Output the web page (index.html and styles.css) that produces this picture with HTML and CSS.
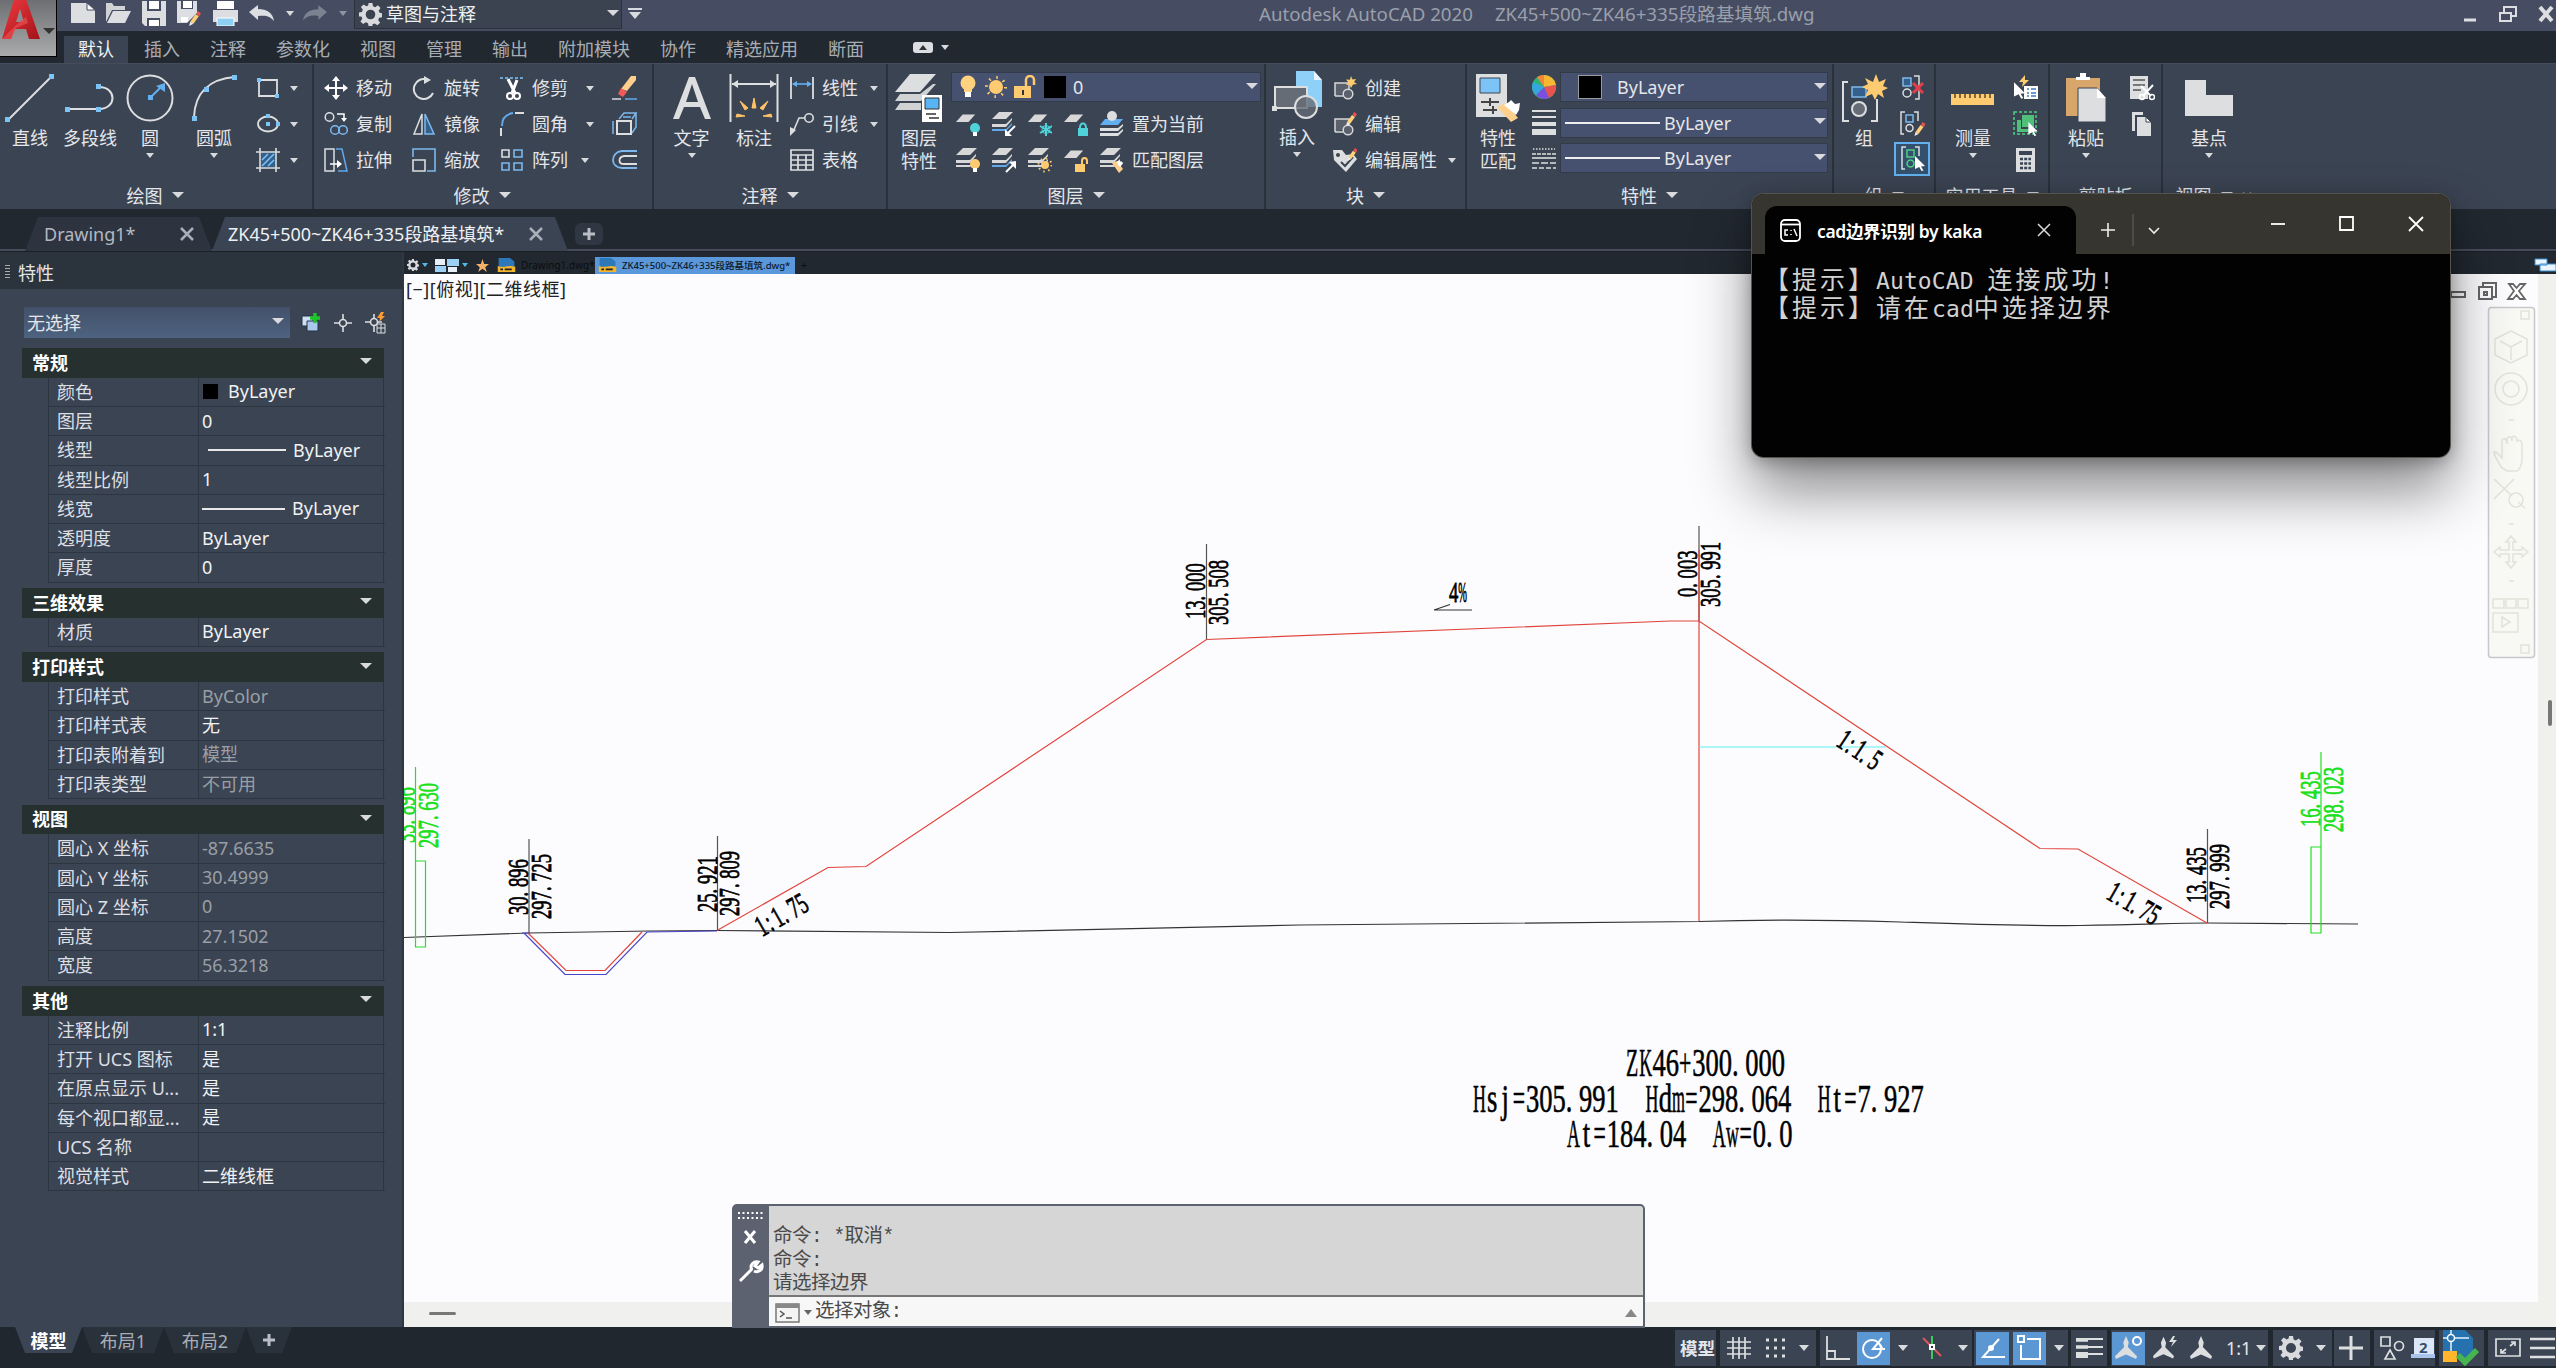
FILE: index.html
```html
<!DOCTYPE html>
<html lang="zh-CN">
<head>
<meta charset="utf-8">
<title>Autodesk AutoCAD 2020</title>
<link rel="stylesheet" href="styles.css">
</head>
<body>
<svg class="defs" width="0" height="0">
  <defs>
    <linearGradient id="redA" x1="0" y1="0" x2="1" y2="1"><stop offset="0" stop-color="#ef3b3f"/><stop offset="1" stop-color="#a3121a"/></linearGradient>
    <symbol id="sheet" viewBox="0 0 24 24"><path d="M8 3h15l-8 9H0z" fill="#d8d8d8"/></symbol>
    <symbol id="stack" viewBox="0 0 24 24"><path d="M7 1h14l-7 7H0z" fill="#d8d8d8"/><path d="M0 13h14l6-6v2l-6 7H0z" fill="#d8d8d8"/><path d="M0 18h14l6-6v2l-6 6H0z" fill="#d8d8d8"/></symbol>
    <symbol id="stackblue" viewBox="0 0 24 24"><path d="M7 1h14l-7 7H0z" fill="#d8d8d8"/><path d="M0 13h14l6-6v2l-6 7H0z" fill="#d8d8d8"/><path d="M0 18h14l6-6v2l-6 6H0z" fill="#62a8ea"/></symbol>
    <symbol id="pencil" viewBox="0 0 12 14"><path d="M9 0l3 2-1.500 3-3-2z" fill="#e8534f"/><path d="M7 3l3 2-5 7-3-2z" fill="#ffcf7a"/><path d="M2 10l3 2-4 2z" fill="#eee"/></symbol>
    <symbol id="gear" viewBox="0 0 24 24"><path fill-rule="evenodd" fill="#d8dade" d="M10 0h4l.6 3.400 2.300 1 2.800-2 2.800 2.800-2 2.800 1 2.300 2.500.5v4l-3 .6-1 2.300 2 2.800-2.800 2.800-2.800-2-2.300 1L14 24h-4l-.6-3-2.300-1-2.800 2-2.800-2.800 2-2.800-1-2.300L0 14v-4l3-.6 1-2.300-2-2.800L4.800 1.500l2.800 2 2-.9zM12 7a5 5 0 100 10 5 5 0 000-10z"/></symbol>
    <symbol id="cursor" viewBox="0 0 10 15"><path d="M0 0l10 10-4 .4 2.500 4-2 .6-2.200-4L0 13z" fill="#fff"/></symbol>
    <symbol id="dwg" viewBox="0 0 20 16"><path d="M1 0h13l5 4v12H1z" fill="#2c78b8"/><path d="M0 9c8 3 12-2 20 1v6H0z" fill="#f4b52c"/><path d="M3 12h3v2H3zM8 12h8v2H8z" fill="#222"/></symbol>
    <symbol id="comp" viewBox="0 0 24 24"><path d="M2 20v-13h14v9" fill="#5a616d" stroke="#d8d8d8" stroke-width="1.500"/><path d="M2 20h8" stroke="#d8d8d8" stroke-width="1.500"/><circle cx="15" cy="18" r="4.800" fill="#5a616d" stroke="#d8d8d8" stroke-width="1.500"/></symbol>
    <symbol id="person" viewBox="0 0 24 26"><path d="M12 0l3 7-1 5 10 10-1 3-11-5-11 5-1-3 10-10-1-5z" fill="#dcdee0"/></symbol>
  </defs>
</svg>

<div class="app">
  <div class="top">
    <div class="appbtn">
      <svg width="40" height="42" viewBox="0 0 40 42"><path d="M0 40L12 0h12l14 40H27l-3-10H12L9 40z" fill="url(#redA)"/><path d="M18 10l-4 13h8z" fill="#8a8f94"/><path d="M0 40L14 26l10-8 2 6-12 5-5 11z" fill="#e5494c" opacity=".8"/></svg>
      <i class="caret dark"></i>
    </div>
    <div class="toprows">
      <header class="titlebar">
        <div class="qat">
          <svg width="24" height="20" viewBox="0 0 24 20"><path d="M0 0h16l8 7v13H0z" fill="#dcdee2"/><path d="M16 0v7h8z" fill="#fff" stroke="#464e63"/></svg>
          <svg width="25" height="20" viewBox="0 0 25 20"><path d="M0 19V0h6l2 3h11v4H6z" fill="#d0d2d6"/><path d="M7 8h18l-6 12H1z" fill="#dcdee2"/></svg>
          <svg width="24" height="25" viewBox="0 0 24 25"><path d="M0 0h24v25H3l-3-3z" fill="#dcdee2"/><path d="M5 0h14v10H5zM5 17h13v8H5z" fill="#464e63"/><path d="M7 0h10v8H7zM7 19h10v6H7z" fill="#fff"/></svg>
          <svg width="25" height="25" viewBox="0 0 25 25"><path d="M0 0h20v12l-10 10H0z" fill="#dcdee2"/><path d="M4 0h12v8H4z" fill="#464e63"/><path d="M6 0h9v7H6zM4 16h7v5H4z" fill="#fff"/><svg x="10" y="10" width="15" height="15"><use href="#pencil"/></svg></svg>
          <svg width="25" height="25" viewBox="0 0 25 25"><path d="M4 0h17v8H4z" fill="#fff"/><path d="M0 9h25v12H0z" fill="#dcdee2"/><path d="M4 17h17v8H4z" fill="#8fd0f5" stroke="#fff"/></svg>
          <svg width="25" height="17" viewBox="0 0 25 17"><path d="M0 7l9-7v4c9 0 15 4 16 12-4-5-8-6-16-5v4z" fill="#dcdee2"/></svg>
          <i class="caret"></i>
          <svg width="24" height="17" viewBox="0 0 25 17"><path d="M25 7l-9-7v4C7 4 1 8 0 16c4-5 8-6 16-5v4z" fill="#7b8290"/></svg>
          <i class="caret faint"></i>
        </div>
        <div class="workspace"><svg width="23" height="23"><use href="#gear"/></svg><span>草图与注释</span><i class="caret big"></i></div>
        <svg class="custom" width="14" height="11" viewBox="0 0 14 11"><path d="M0 0h14v2H0zM1 4h12l-6 7z" fill="#d8dade"/></svg>
        <div class="caption"><span>Autodesk AutoCAD 2020</span><span>ZK45+500~ZK46+335段路基填筑.dwg</span></div>
        <div class="winbtns">
          <svg width="92" height="20" viewBox="0 0 92 20"><path d="M0 16h12" stroke="#dcdee2" stroke-width="3"/><g fill="none" stroke="#dcdee2" stroke-width="2"><path d="M40 8V3h12v9h-5"/><path d="M36 9h11v8H36z"/></g><path d="M76 3l12 14M88 3L76 17" stroke="#dcdee2" stroke-width="4"/></svg>
        </div>
      </header>
      <nav class="menu">
        <a class="on">默认</a><a>插入</a><a>注释</a><a>参数化</a><a>视图</a><a>管理</a><a>输出</a><a>附加模块</a><a>协作</a><a>精选应用</a><a>断面</a>
        <svg width="20" height="11" viewBox="0 0 20 11"><rect width="20" height="11" rx="3" fill="#dcdee2"/><path d="M6 8l4-5 4 5z" fill="#333"/></svg><i class="caret"></i>
      </nav>
    </div>
  </div>

  <div class="ribbon">
    <section class="panel p-draw">
      <div class="body">
        <div class="big w60"><svg width="50" height="50" viewBox="0 0 50 50"><path d="M4 46L46 4" stroke="#dcdee0" stroke-width="2"/><path d="M0 44h5v5H0zM44 1h5v5h-5z" fill="#7cc4f8"/></svg><b>直线</b></div>
        <div class="big w60"><svg width="50" height="50" viewBox="0 0 50 50"><path d="M3 36h32M34 14c18 0 18 22 0 22" fill="none" stroke="#dcdee0" stroke-width="2"/><path d="M0 34h5v5H0zM31 34h5v5h-5zM31 11h5v5h-5z" fill="#7cc4f8"/></svg><b>多段线</b></div>
        <div class="big w60"><svg width="50" height="50" viewBox="0 0 50 50"><circle cx="25" cy="25" r="22.500" fill="none" stroke="#dcdee0" stroke-width="2"/><path d="M26 24l11-11" stroke="#62b0f0" stroke-width="2"/><path d="M40 10v9l-9-6zM23 22h5v5h-5z" fill="#62b0f0"/></svg><b>圆</b><i class="caret"></i></div>
        <div class="big w68"><svg width="50" height="50" viewBox="0 0 50 50"><path d="M5 44C6 20 20 6 46 4" fill="none" stroke="#dcdee0" stroke-width="2"/><path d="M3 43h5v5H3zM15 14h5v5h-5zM43 2h5v5h-5z" fill="#7cc4f8"/></svg><b>圆弧</b><i class="caret"></i></div>
        <div class="tools">
          <div class="tool"><svg width="24" height="24"><path d="M3 4h18v16H3z" fill="none" stroke="#dcdee0" stroke-width="1.800"/><path d="M1 2h4v4H1zM19 18h4v4h-4z" fill="#7cc4f8"/></svg><i class="caret"></i></div>
          <div class="tool"><svg width="24" height="24"><ellipse cx="12" cy="12" rx="10" ry="7.500" fill="none" stroke="#dcdee0" stroke-width="1.800"/><path d="M10 10h4v4h-4zM10 2h4v4h-4zM20 10h4v4h-4z" fill="#7cc4f8"/></svg><i class="caret"></i></div>
          <div class="tool"><svg width="24" height="24"><path d="M5 5h14v14H5z" fill="#35608c"/><path d="M6 12l6-6M6 18L18 6M12 18l6-6" stroke="#7cc4f8" stroke-width="1.500"/><path d="M4 0v24M20 0v24M0 4h24M0 20h24" stroke="#dcdee0" stroke-width="1.600"/></svg><i class="caret"></i></div>
        </div>
      </div>
      <h4>绘图<i class="caret big"></i></h4>
    </section>

    <section class="panel p-modify">
      <div class="body grid">
        <div class="tool"><svg width="24" height="24"><path d="M12 3v18M3 12h18" stroke="#fff" stroke-width="2"/><path d="M12 0l4 5H8zM12 24l4-5H8zM0 12l5-4v8zM24 12l-5-4v8z" fill="#fff"/></svg><b>移动</b></div>
        <div class="tool"><svg width="24" height="24"><path d="M15 3.500A10 10 0 1 0 21 17" fill="none" stroke="#dcdee0" stroke-width="2"/><path d="M12 0l7 4-7 4z" fill="#dcdee0"/></svg><b>旋转</b></div>
        <div class="tool"><svg width="24" height="24"><path d="M0 2h24" stroke="#7cc4f8" stroke-width="1.500" stroke-dasharray="3 2"/><path d="M8 3l7 14M17 4l-5 13" stroke="#fff" stroke-width="3"/><circle cx="10" cy="20" r="3" fill="none" stroke="#fff" stroke-width="2"/><circle cx="17" cy="20" r="3" fill="none" stroke="#fff" stroke-width="2"/></svg><b>修剪</b><i class="caret"></i></div>
        <div class="tool"><svg width="26" height="24"><path d="M19 0h5v4l-9 11-6-2z" fill="#ffcf8c"/><path d="M9 12l6 4-4 5-5-3z" fill="#ee5b5b"/><path d="M0 23h9" stroke="#ddd" stroke-width="1.500"/><path d="M13 23h12" stroke="#62a8ea" stroke-width="1.500"/></svg></div>
        <div class="tool"><svg width="24" height="24"><circle cx="5.500" cy="5" r="4.300" fill="none" stroke="#dcdee0" stroke-width="1.500"/><path d="M13 2h7v5" fill="none" stroke="#fff" stroke-width="1.500"/><path d="M17 6h6l-3 4z" fill="#fff"/><g fill="none" stroke="#7cb8ee" stroke-width="1.500"><circle cx="11" cy="18" r="4.300"/><circle cx="19" cy="18" r="4.300"/></g></svg><b>复制</b></div>
        <div class="tool"><svg width="24" height="24"><path d="M10 2v20H2z" fill="none" stroke="#dcdee0" stroke-width="1.500"/><path d="M13 2v20h9z" fill="#35608c" stroke="#7cb8ee" stroke-width="1.500"/></svg><b>镜像</b></div>
        <div class="tool"><svg width="24" height="24"><path d="M2 14C2 5 7 2 13 1" fill="none" stroke="#62a8ea" stroke-width="2"/><path d="M15 1h9M1 16v8" stroke="#dcdee0" stroke-width="2"/></svg><b>圆角</b><i class="caret"></i></div>
        <div class="tool"><svg width="26" height="24"><path d="M5 9h14v13H5z" fill="none" stroke="#dcdee0" stroke-width="2"/><path d="M7 7l5-6h12l-4 6M24 1v14l-4 6M1 9v13M11 5h8" fill="none" stroke="#7cb8ee" stroke-width="1.500"/></svg></div>
        <div class="tool"><svg width="24" height="24"><path d="M1 1h9v22H1z" fill="none" stroke="#dcdee0" stroke-width="1.500"/><path d="M12 1h6l5 22h-9" fill="none" stroke="#62a8ea" stroke-width="1.500"/><path d="M6 16h10" stroke="#fff" stroke-width="1.500"/><path d="M13 12l5 4-5 4z" fill="#fff"/></svg><b>拉伸</b></div>
        <div class="tool"><svg width="24" height="24"><path d="M1 9V1h22v22h-8" fill="none" stroke="#7cb8ee" stroke-width="1.600"/><path d="M1 12h12v11H1z" fill="none" stroke="#dcdee0" stroke-width="1.600"/></svg><b>缩放</b></div>
        <div class="tool"><svg width="24" height="24" fill="none" stroke="#7cb8ee" stroke-width="1.600"><path d="M2 2h7v7H2z" stroke="#dcdee0"/><path d="M14 2h8v7h-8zM2 15h7v7H2zM14 15h8v7h-8z"/></svg><b>阵列</b><i class="caret near"></i></div>
        <div class="tool"><svg width="26" height="24" fill="none"><path d="M25 3H10C-2 4-2 20 10 20h15" stroke="#7cb8ee" stroke-width="1.800"/><path d="M25 8H12c-6 1-6 8 0 8h13" stroke="#dcdee0" stroke-width="1.800"/></svg></div>
      </div>
      <h4>修改<i class="caret big"></i></h4>
    </section>

    <section class="panel p-annot">
      <div class="body">
        <div class="big w75"><svg width="50" height="50" viewBox="0 0 50 50"><path d="M6 46L22 4h6l16 42h-6l-5-12H17l-5 12zM19 29h12L25 11z" fill="#dcdee0" fill-rule="evenodd"/></svg><b>文字</b><i class="caret"></i></div>
        <div class="big w50"><svg width="50" height="50" viewBox="0 0 50 50"><path d="M1.500 1v48M48.500 1v48M3 11h44" stroke="#dcdee0" stroke-width="2"/><path d="M3 11l6-4v8zM47 11l-6-4v8z" fill="#dcdee0"/><path d="M23 35l2-10 2 10zM16 37l-5-9 8 7zM34 37l5-9-8 7zM7 44l9-1-8-2zM43 44l-9-1 8-2z" fill="#ffc266" stroke="#ffc266"/></svg><b>标注</b></div>
        <div class="tools">
          <div class="tool"><svg width="24" height="24"><path d="M1 1v22M23 1v22" stroke="#dcdee0" stroke-width="1.800"/><path d="M3 8h18" stroke="#62b0f0" stroke-width="1.600"/><path d="M2 8l5-3v6zM22 8l-5-3v6z" fill="#62b0f0"/></svg><b>线性</b><i class="caret"></i></div>
          <div class="tool"><svg width="24" height="24"><circle cx="19" cy="6" r="4.200" fill="none" stroke="#dcdee0" stroke-width="1.600"/><path d="M15 6H9L3 20" fill="none" stroke="#dcdee0" stroke-width="1.600"/><path d="M0 24V15l6 3z" fill="#dcdee0"/></svg><b>引线</b><i class="caret"></i></div>
          <div class="tool"><svg width="24" height="24"><path d="M1 2h22v20H1zM1 7h22M1 12h22M1 17h22M8 7v15M16 7v15" fill="none" stroke="#dcdee0" stroke-width="1.700"/></svg><b>表格</b></div>
        </div>
      </div>
      <h4>注释<i class="caret big"></i></h4>
    </section>

    <section class="panel p-layer">
      <div class="body">
        <div class="big w62"><svg width="50" height="50" viewBox="0 0 50 50"><path d="M16 1h26L26 19H1z" fill="#dcdee0"/><path d="M6 21h20l13-10h3L27 28H1zM6 30h21v7H1z" fill="#d0d2d4"/><path d="M28 22h20v27H28z" fill="#fff"/><path d="M31 25h14v11H31z" fill="#58b4f2" stroke="#333"/><path d="M32 41h10M35 45h10" stroke="#333" stroke-width="1.500"/></svg><b>图层<br>特性</b></div>
        <div class="layercol">
          <div class="combo">
            <svg width="76" height="24" viewBox="0 0 76 24"><circle cx="8" cy="8" r="7.500" fill="#ffd27f"/><path d="M4 12h8v5H4z" fill="#ffd27f"/><path d="M5 17h6v5H5z" fill="#fff"/><circle cx="36" cy="12" r="7" fill="#ffcb70"/><circle cx="36" cy="12" r="9.500" fill="none" stroke="#ffcb70" stroke-width="3" stroke-dasharray="1.500 5.960"/><path d="M54 11h17v12H54z" fill="#ffcb70"/><path d="M66 11V5a4 4 0 0 1 8 0v5" fill="none" stroke="#ffcb70" stroke-width="2.500"/><path d="M62 15h2v5h-2z" fill="#333"/></svg>
            <i class="swatch"></i><span>0</span><i class="caret big"></i>
          </div>
          <div class="icons">
            <svg width="24" height="26" viewBox="0 0 24 26"><use href="#sheet" width="20" height="22"/><circle cx="19" cy="17" r="5" fill="#4fd3d8"/><path d="M17 21h4v4h-4z" fill="#fff"/></svg>
            <svg width="24" height="26" viewBox="0 0 24 26"><use href="#stackblue" width="24" height="24"/><path d="M23 15l-8 8" stroke="#fff" stroke-width="2"/><path d="M13 25v-7l7 7z" fill="#fff"/></svg>
            <svg width="24" height="26" viewBox="0 0 24 26"><use href="#sheet" width="20" height="22"/><path d="M18 12v13M12 15l12 7M24 15l-12 7" stroke="#4fd3d8" stroke-width="2"/><circle cx="18" cy="18.500" r="4" fill="none" stroke="#4fd3d8"/></svg>
            <svg width="24" height="26" viewBox="0 0 24 26"><use href="#sheet" width="20" height="22"/><path d="M14 17h10v8H14z" fill="#4fd3d8"/><path d="M16 17c0-6 6-6 6 0" fill="none" stroke="#4fd3d8" stroke-width="2"/></svg>
            <svg width="24" height="26" viewBox="0 0 24 26"><path d="M5 8h18l-5 6H0z" fill="#62b0f0"/><circle cx="12" cy="5" r="5" fill="#dcdee0"/><path d="M0 17h18l5-4v2l-5 5H0zM0 22h18l5-4v2l-5 5H0z" fill="#dcdee0"/></svg>
            <b>置为当前</b>
          </div>
          <div class="icons">
            <svg width="24" height="26" viewBox="0 0 24 26"><use href="#stack" width="24" height="24"/><circle cx="19" cy="17" r="5" fill="#ffcb70"/><path d="M17 21h4v4h-4z" fill="#fff"/></svg>
            <svg width="24" height="26" viewBox="0 0 24 26"><use href="#stackblue" width="24" height="24"/><path d="M14 25l8-8" stroke="#fff" stroke-width="2"/><path d="M24 14v8l-7-7z" fill="#fff"/></svg>
            <svg width="24" height="26" viewBox="0 0 24 26"><use href="#stack" width="24" height="24"/><circle cx="17" cy="18" r="4" fill="#ffcb70"/><circle cx="17" cy="18" r="6.500" fill="none" stroke="#ffcb70" stroke-width="2" stroke-dasharray="1.500 3.600"/></svg>
            <svg width="24" height="26" viewBox="0 0 24 26"><use href="#sheet" width="20" height="22"/><path d="M11 17h10v8H11z" fill="#ffcb70"/><path d="M18 17v-3c0-4 5-4 5 0v3" fill="none" stroke="#ffcb70" stroke-width="2"/></svg>
            <svg width="24" height="26" viewBox="0 0 24 26"><use href="#stack" width="24" height="24"/><path d="M12 16l5-2 6 8-4 4z" fill="#ffcf8c"/><path d="M18 14l2 3M22 15l-3 4" stroke="#fff" stroke-width="3"/></svg>
            <b>匹配图层</b>
          </div>
        </div>
      </div>
      <h4>图层<i class="caret big"></i></h4>
    </section>

    <section class="panel p-block">
      <div class="body">
        <div class="big w62"><svg class="up2" width="50" height="50" viewBox="0 0 50 50"><path d="M24 0h18l8 9v27H24z" fill="#8fd0f8"/><path d="M42 0v9h8z" fill="#e8f4ff"/><path d="M3 16h32v21H3z" fill="#666c76" stroke="#dcdee0" stroke-width="2"/><circle cx="34" cy="36" r="11" fill="#666c76" fill-opacity=".8" stroke="#dcdee0" stroke-width="2"/><path d="M0 35h5v5H0z" fill="#dcdee0"/></svg><b>插入</b><i class="caret"></i></div>
        <div class="tools">
          <div class="tool"><svg width="24" height="24"><use href="#comp"/><path d="M18 0l1.500 3.500L23 3l-2 3 3 2-4 .6L18 12l-1.500-3.500L13 9l2-3-2-2.500 4 .2z" fill="#ffcb70"/></svg><b>创建</b></div>
          <div class="tool"><svg width="24" height="24"><use href="#comp"/><svg x="12" y="0" width="12" height="14"><use href="#pencil"/></svg></svg><b>编辑</b></div>
          <div class="tool"><svg width="24" height="24"><path d="M0 2h9l4 5 7-1 4 5-11 13L1 12z" fill="#dcdee0"/><circle cx="5" cy="7" r="2" fill="#3b4453"/><path d="M8 14l4 4 8-9" fill="none" stroke="#3b4453" stroke-width="2"/><svg x="13" y="0" width="12" height="13"><use href="#pencil"/></svg></svg><b>编辑属性</b><i class="caret"></i></div>
        </div>
      </div>
      <h4>块<i class="caret big"></i></h4>
    </section>

    <section class="panel p-props">
      <div class="body">
        <div class="big w62"><svg width="50" height="50" viewBox="0 0 50 50"><path d="M3 1h31v43H3z" fill="#dcdee0"/><path d="M7 5h20v15H7z" fill="#7cc4f8" stroke="#3b4453"/><path d="M8 29h18M10 37h14M17 25v8M20 33v8" stroke="#444" stroke-width="2"/><path d="M24 34l9-4 12 15-7 4z" fill="#ffcf8c"/><path d="M31 32l5-3 2-2 4 4 5-1-1 7-3 5z" fill="#fff"/></svg><b>特性<br>匹配</b></div>
        <div class="propicons">
          <svg width="26" height="26"><circle cx="13" cy="13" r="12" fill="#2bb673"/><path d="M13 13V1a12 12 0 0 1 12 10z" fill="#f7b733"/><path d="M13 13l12-2a12 12 0 0 1-7 13z" fill="#e8534f"/><path d="M13 13l5 11a12 12 0 0 1-13-3z" fill="#7b4fe0"/><path d="M13 13l-8 8a12 12 0 0 1-3-13z" fill="#35a7e0"/><path d="M13 13L6 3a12 12 0 0 1 7-2z" fill="#f5853a"/></svg>
          <svg width="26" height="26"><path d="M1 1h24M1 7h24" stroke="#dcdee0" stroke-width="2"/><path d="M1 14h24" stroke="#dcdee0" stroke-width="4"/><path d="M1 22h24" stroke="#dcdee0" stroke-width="6"/></svg>
          <svg width="26" height="26" stroke="#dcdee0" stroke-width="1.600"><path d="M2 3h22" stroke-dasharray="1.500 1.500"/><path d="M1 8h24" stroke-dasharray="4 1"/><path d="M1 12h24"/><path d="M1 17h24" stroke-dasharray="7 2"/><path d="M1 22h24" stroke-dasharray="5 2"/></svg>
        </div>
        <div class="combos">
          <div class="combo c1"><i class="swatch"></i><span>ByLayer</span><i class="caret big"></i></div>
          <div class="combo"><i class="rule"></i><span>ByLayer</span><i class="caret big"></i></div>
          <div class="combo"><i class="rule"></i><span>ByLayer</span><i class="caret big"></i></div>
        </div>
      </div>
      <h4>特性<i class="caret big"></i></h4>
    </section>

    <section class="panel p-group">
      <div class="body">
        <div class="big w60"><svg width="50" height="50" viewBox="0 0 50 50"><path d="M9 9H4v39h6M32 48h6V26" fill="none" stroke="#dcdee0" stroke-width="2"/><path d="M13 14h14v10H13z" fill="#35608c" stroke="#7cb8ee" stroke-width="1.500"/><circle cx="20" cy="36" r="7" fill="#666c76" stroke="#dcdee0" stroke-width="2"/><path d="M37 1l3 8 7-3-3 7 5 2-6 3 2 7-6-4-3 6-3-6-7 3 3-7-6-3 6-3-3-6 8 4z" fill="#ffcb70"/></svg><b>组</b></div>
        <div class="tools flush">
          <div class="tool"><svg width="26" height="26" fill="none"><path d="M3 3h8v8H3z" fill="#35608c" stroke="#7cb8ee" stroke-width="1.500"/><circle cx="7" cy="18" r="4" stroke="#dcdee0" stroke-width="1.500"/><path d="M14 1h5v23h-4" stroke="#dcdee0" stroke-width="1.500"/><path d="M13 8l10 10M23 8L13 18" stroke="#e33f4a" stroke-width="3"/></svg></div>
          <div class="tool"><svg width="26" height="26" fill="none"><path d="M6 4h7v7H6z" stroke="#7cb8ee" stroke-width="1.500"/><circle cx="9.500" cy="17" r="3.500" stroke="#dcdee0" stroke-width="1.500"/><path d="M5 1H1v22h3M14 1h4v9" stroke="#dcdee0" stroke-width="1.500"/><svg x="13" y="11" width="13" height="14"><use href="#pencil"/></svg></svg></div>
          <div class="tool active"><svg width="26" height="26" fill="none"><path d="M6 4h7v7H6zM9.500 14a3.500 3.500 0 1 0 .1 0" stroke="#4bd080" stroke-width="1.500"/><path d="M5 1H1v22h3M14 1h4v9" stroke="#dcdee0" stroke-width="1.500"/><svg x="14" y="10" width="10" height="15"><use href="#cursor"/></svg></svg></div>
        </div>
      </div>
      <h4>组<i class="caret big"></i></h4>
    </section>

    <section class="panel p-util">
      <div class="body">
        <div class="big w74"><svg width="50" height="50" viewBox="0 0 50 50"><path d="M3 21h43v11H3z" fill="#ffcb70"/><path d="M7 21v4M12 21v4M17 21v4M22 21v4M27 21v4M32 21v4M37 21v4M42 21v4" stroke="#5c4a20" stroke-width="1.500"/></svg><b>测量</b><i class="caret"></i></div>
        <div class="tools">
          <div class="tool"><svg width="26" height="26"><path d="M12 0l-6 7h4l-1 5 7-7h-4z" fill="#ffcb70"/><path d="M11 11h14v13H11z" fill="#fff"/><path d="M14 14h2M18 14h5M14 18h2M18 18h5M14 21h2M18 21h5" stroke="#3b7ac0" stroke-width="1.500"/><svg x="1" y="7" width="11" height="17"><use href="#cursor"/></svg></svg></div>
          <div class="tool"><svg width="26" height="26"><path d="M1 1h22v22H1z" fill="none" stroke="#4bd080" stroke-width="1.500" stroke-dasharray="3 2"/><path d="M9 4h12v12H9z" fill="#4fbf7a"/><path d="M4 9h4v9h9v3H4z" fill="#4fbf7a"/><svg x="15" y="11" width="10" height="14"><use href="#cursor"/></svg></svg></div>
          <div class="tool"><svg width="26" height="26"><path d="M3 1h19v24H3z" fill="#dcdee0"/><path d="M6 4h13v4H6z" fill="#3b4453"/><path d="M7 12h11M7 16.500h11M7 21h11" stroke="#3b4453" stroke-width="2.500" stroke-dasharray="3 1.200"/></svg></div>
        </div>
      </div>
      <h4>实用工具<i class="caret big"></i></h4>
    </section>

    <section class="panel p-clip">
      <div class="body">
        <div class="big w72"><svg width="50" height="50" viewBox="0 0 50 50"><path d="M5 5h34v38H5z" fill="#d8a66a"/><path d="M15 7V4h4V0h6v4h4v3z" fill="#fff"/><path d="M17 15h19l9 10v24H17z" fill="#dcdee0" stroke="#3b4453"/><path d="M36 15v10h9z" fill="#fff"/></svg><b>粘贴</b><i class="caret"></i></div>
        <div class="tools">
          <div class="tool"><svg width="26" height="26"><path d="M1 1h18v23H1z" fill="#dcdee0"/><path d="M4 5h12M4 10h12M4 15h8" stroke="#555" stroke-width="1.500"/><path d="M12 11l10 10M24 10L14 21" stroke="#fff" stroke-width="2"/><circle cx="13" cy="22" r="2.500" fill="none" stroke="#fff" stroke-width="1.500"/><circle cx="23" cy="22" r="2.500" fill="none" stroke="#fff" stroke-width="1.500"/></svg></div>
          <div class="tool"><svg width="26" height="26"><path d="M3 20V1h11v3H6v16z" fill="#dcdee0"/><path d="M8 6h9l5 5v14H8z" fill="#dcdee0"/><path d="M17 6v5h5z" fill="#fff" stroke="#3b4453"/></svg></div>
        </div>
      </div>
      <h4>剪贴板</h4>
    </section>

    <section class="panel p-view">
      <div class="body">
        <div class="big w92"><svg width="50" height="50" viewBox="0 0 50 50"><path d="M1 7h21v15h27v21H1z" fill="#dcdee0"/></svg><b>基点</b><i class="caret"></i></div>
      </div>
      <h4>视图<i class="caret big"></i><em>⇲</em></h4>
    </section>
  </div>

  <div class="files">
    <div class="ftab t1"><span>Drawing1*</span><svg width="14" height="14"><path d="M1 1l12 12M13 1L1 13" stroke="#a9afb8" stroke-width="2.500"/></svg></div>
    <div class="ftab t2"><span>ZK45+500~ZK46+335段路基填筑*</span><svg width="14" height="14"><path d="M1 1l12 12M13 1L1 13" stroke="#a9afb8" stroke-width="2.500"/></svg></div>
    <div class="fadd"><svg width="12" height="12"><path d="M6 0v12M0 6h12" stroke="#b9bec6" stroke-width="3"/></svg></div>
  </div>

  <div class="main">
    <aside class="side">
      <div class="sidehead"><i class="grip"></i>特性</div>
      <div class="selrow">
        <div class="sel">无选择<i class="caret big"></i></div>
        <svg width="20" height="20"><path d="M1 3h11v10H1z" fill="#cfe0f5" stroke="#234"/><path d="M6 8h11v10H6z" fill="#a9c8ec" stroke="#234"/><path d="M14 0v10M9 5h10" stroke="#1fc42b" stroke-width="3.500"/></svg>
        <svg width="18" height="18"><path d="M9 0v18M0 9h18" stroke="#dcdee0" stroke-width="1.600"/><circle cx="9" cy="9" r="3.500" fill="#3b4453" stroke="#dcdee0" stroke-width="1.600"/></svg>
        <svg width="22" height="22"><path d="M9 2v18M0 10h17" stroke="#dcdee0" stroke-width="1.600"/><circle cx="9" cy="10" r="3.500" fill="#3b4453" stroke="#dcdee0" stroke-width="1.600"/><path d="M16 0l-4 6h3l-1 4 6-6h-3l2-4z" fill="#ff9d2e"/><path d="M12 12h8v9h-8zM12 16h8M16 12v9" fill="#3b4453" stroke="#dcdee0"/></svg>
      </div>
      <div class="sec"><h5>常规<i class="caret big"></i></h5>
        <dl><dt>颜色</dt><dd><i class="sw"></i>ByLayer</dd><dt>图层</dt><dd>0</dd><dt>线型</dt><dd><i class="ln a"></i>ByLayer</dd><dt>线型比例</dt><dd>1</dd><dt>线宽</dt><dd><i class="ln"></i>ByLayer</dd><dt>透明度</dt><dd>ByLayer</dd><dt>厚度</dt><dd>0</dd></dl></div>
      <div class="sec"><h5>三维效果<i class="caret big"></i></h5>
        <dl><dt>材质</dt><dd>ByLayer</dd></dl></div>
      <div class="sec"><h5>打印样式<i class="caret big"></i></h5>
        <dl><dt>打印样式</dt><dd class="dim">ByColor</dd><dt>打印样式表</dt><dd>无</dd><dt>打印表附着到</dt><dd class="dim">模型</dd><dt>打印表类型</dt><dd class="dim">不可用</dd></dl></div>
      <div class="sec"><h5>视图<i class="caret big"></i></h5>
        <dl><dt>圆心 X 坐标</dt><dd class="dim">-87.6635</dd><dt>圆心 Y 坐标</dt><dd class="dim">30.4999</dd><dt>圆心 Z 坐标</dt><dd class="dim">0</dd><dt>高度</dt><dd class="dim">27.1502</dd><dt>宽度</dt><dd class="dim">56.3218</dd></dl></div>
      <div class="sec"><h5>其他<i class="caret big"></i></h5>
        <dl><dt>注释比例</dt><dd>1:1</dd><dt>打开 UCS 图标</dt><dd>是</dd><dt>在原点显示 U...</dt><dd>是</dd><dt>每个视口都显...</dt><dd>是</dd><dt>UCS 名称</dt><dd></dd><dt>视觉样式</dt><dd>二维线框</dd></dl></div>
    </aside>

    <div class="work">
      <div class="strip">
        <svg width="12" height="12"><use href="#gear"/></svg><i class="caret cy"></i>
        <svg class="m1" width="24" height="13"><path d="M0 0h10v6H0zM13 8h9v5h-9z" fill="#e8eef6"/><path d="M12 0h12v7H12zM0 7h11v6H0z" fill="#9cd0f5"/></svg><i class="caret cy"></i>
        <svg class="m2" width="13" height="13" viewBox="0 0 24 24"><path d="M12 0l3 9h9l-7 6 3 9-8-6-8 6 3-9-7-6h9z" fill="#f7b26a"/></svg>
        <svg class="m3" width="19" height="14"><use href="#dwg"/></svg><span class="d1">Drawing1.dwg*</span>
        <div class="d2"><svg width="19" height="14"><use href="#dwg"/></svg><span>ZK45+500~ZK46+335段路基填筑.dwg*</span></div><span class="pl">+</span>
        <svg class="m4" width="22" height="14"><path d="M1 1h12v6H1zM6 6h16v7H6z" fill="#e9f4ff" stroke="#3b8ed0"/></svg>
      </div>
      <svg class="canvas" width="2152" height="1053" viewBox="404 274 2152 1053">
        <rect x="404" y="274" width="2152" height="1053" fill="#fcfcff"/>
        <rect x="2538" y="274" width="18" height="1053" fill="#f0f0ec"/>
        <rect x="404" y="1302" width="2134" height="25" fill="#f0f0ee"/>
        <rect x="2548" y="700" width="4" height="26" rx="2" fill="#777"/>
        <rect x="429" y="1312" width="27" height="3" rx="1.500" fill="#777"/>
        <text x="406" y="296" class="vp" textLength="160">[−][俯视][二维线框]</text>

        <g class="ln">
          <path stroke="#333" d="M404 937.500L528 933l122-2 67-.5 233 2 350-7.500 399-3.500c60-2 140-1.500 201 .5s115 4 180 3.500 90-2.500 127-2.500 90 1 151 1"/>
          <path stroke="#555" d="M1206.500 544v95M529 839v94M717.500 836v94M2207.500 829v94M1699 526v95"/>
          <path stroke="#e0453c" d="M717 930.500l111-63 38-1 340.500-227 464-18.500h28.500l341 227.500 38 .5 129 74M1699 550v371M528 933l38 37.500h39l37-38.500"/>
          <path stroke="#4a46c8" d="M524 933l41 41.500h41l41-42.500 70-1M522 933h8"/>
          <path stroke="#5ceef4" d="M1699 747h187"/>
          <path stroke="#22e022" d="M415.500 767v180h10v-86h-10M2321 752v181h-10v-86h10"/>
          <path stroke="#333" d="M1472 610h-38l16-5.500"/>
        </g>

        <g class="st">
          <text transform="translate(1205,619) rotate(-90) scale(.62,1)" x="0 15 30 45 60 75">13.000</text>
          <text transform="translate(1228,625) rotate(-90) scale(.62,1)" x="0 15 30 45 60 75 90">305.508</text>
          <text transform="translate(527.500,915) rotate(-90) scale(.62,1)" x="0 15 30 45 60 75">30.896</text>
          <text transform="translate(550.500,919) rotate(-90) scale(.62,1)" x="0 15 30 45 60 75 90">297.725</text>
          <text transform="translate(716.500,912) rotate(-90) scale(.62,1)" x="0 15 30 45 60 75">25.921</text>
          <text transform="translate(739,916) rotate(-90) scale(.62,1)" x="0 15 30 45 60 75 90">297.809</text>
          <text transform="translate(1697,597) rotate(-90) scale(.62,1)" x="0 15 30 45 60">0.003</text>
          <text transform="translate(1720,607) rotate(-90) scale(.62,1)" x="0 15 30 45 60 75 90">305.991</text>
          <text transform="translate(2206,903) rotate(-90) scale(.62,1)" x="0 15 30 45 60 75">13.435</text>
          <text transform="translate(2229,909) rotate(-90) scale(.62,1)" x="0 15 30 45 60 75 90">297.999</text>
          <text transform="translate(762,937) rotate(-29.600) scale(.62,1)" x="0 17 30 45 60 75">1:1.75</text>
          <text transform="translate(1835,745) rotate(33.700) scale(.62,1)" x="0 17 30 45 60">1:1.5</text>
          <text transform="translate(2105,898) rotate(29.800) scale(.62,1)" x="0 17 30 45 60 75">1:1.75</text>
          <text transform="translate(1449,602) scale(.62,1)" x="0 15">4<tspan textLength="14" lengthAdjust="spacingAndGlyphs">%</tspan></text>
          <g class="gr">
            <text transform="translate(415,843) rotate(-90) scale(.62,1)" x="0 15 30 45 60 75">33.896</text>
            <text transform="translate(437.500,848) rotate(-90) scale(.62,1)" x="0 15 30 45 60 75 90">297.630</text>
            <text transform="translate(2320,827) rotate(-90) scale(.62,1)" x="0 15 30 45 60 75">16.435</text>
            <text transform="translate(2343,832) rotate(-90) scale(.62,1)" x="0 15 30 45 60 75 90">298.023</text>
          </g>
        </g>
        <g class="ti">
          <text transform="translate(1626,1076) scale(.68,1)" x="0 19.500 39 58.500 78 97.500 117 136.500 156 175.500 195 214.500"><tspan textLength="18" lengthAdjust="spacingAndGlyphs">Z</tspan><tspan textLength="19" lengthAdjust="spacingAndGlyphs">K</tspan>46<tspan textLength="18" lengthAdjust="spacingAndGlyphs">+</tspan>300.000</text>
          <text transform="translate(1473,1111.500) scale(.68,1)" x="0 20.500 42 58.500 78 97.500 117 136.500 156 175.500 195 214.500 234 253.500 273 292.500 312 331.500 351 370.500 390 409.500 429 448.500 468 487.500 507 530 546 565.500 585 604.500 624 643.500"><tspan textLength="19" lengthAdjust="spacingAndGlyphs">H</tspan>sj<tspan textLength="18" lengthAdjust="spacingAndGlyphs">=</tspan>305.991  <tspan textLength="19" lengthAdjust="spacingAndGlyphs">H</tspan>d<tspan textLength="19" lengthAdjust="spacingAndGlyphs">m</tspan><tspan textLength="18" lengthAdjust="spacingAndGlyphs">=</tspan>298.064  <tspan textLength="19" lengthAdjust="spacingAndGlyphs">H</tspan>t<tspan textLength="18" lengthAdjust="spacingAndGlyphs">=</tspan>7.927</text>
          <text transform="translate(1567,1147) scale(.68,1)" x="0 23 39 58.500 78 97.500 117 136.500 156 175.500 195 214.500 234 253.500 273 292.500 312"><tspan textLength="19" lengthAdjust="spacingAndGlyphs">A</tspan>t<tspan textLength="18" lengthAdjust="spacingAndGlyphs">=</tspan>184.04  <tspan textLength="19" lengthAdjust="spacingAndGlyphs">A</tspan><tspan textLength="19" lengthAdjust="spacingAndGlyphs">w</tspan><tspan textLength="18" lengthAdjust="spacingAndGlyphs">=</tspan>0.0</text>
        </g>

        <g fill="#fff" stroke="#666" stroke-width="2">
          <path d="M2451 292h14v5h-14z"/><path d="M2483 287v-4h13v14h-4"/><path d="M2479 287h13v12h-13zM2484 292h3v3h-3z"/>
          <path d="M2509 284h4l3.500 4 3.500-4h5l-6 7 6 8h-5l-3.500-4-3.500 4h-5l6-8z" stroke-width="1.800"/>
        </g>
        <g fill="none" stroke="#e2e2da" stroke-width="1.500">
          <rect x="2488.500" y="307.500" width="46" height="350" rx="3" fill="#f8f8f5" stroke="#c8c8cc"/>
          <path d="M2521 311h8v8h-8zM2521 645h8v8h-8z"/>
          <path d="M2511 331l16 8v16l-16 8-16-8v-16zM2500 341l11 6 11-6M2511 347v13"/>
          <circle cx="2511" cy="389" r="16"/><circle cx="2511" cy="389" r="8"/>
          <path d="M2509 420h5M2509 524h5M2509 581h5"/>
          <path d="M2502 468c-4-6-8-12-8-16 4-1 5 4 8 6v-18c3-3 5 0 5 4v-6c3-3 5 0 5 3v-4c3-2 5 0 5 4 3-2 5 0 5 4v14c0 6-3 12-6 12h-9z"/>
          <path d="M2494 479l18 17M2514 479l-20 20M2525 508l-7-6"/><circle cx="2516" cy="500" r="7"/>
          <path d="M2511 536l5 6h-3v8h9v-3l6 5-6 5v-3h-9v8h3l-5 6-5-6h3v-8h-9v3l-6-5 6-5v3h9v-8h-3z"/>
          <path d="M2493 599h11v9h-11zM2506 599h10v9h-10zM2518 599h10v9h-10zM2493 613h25v19h-25zM2502 617l8 5-8 5z"/>
        </g>
      </svg>
      <div class="cmd">
        <div class="cmdside">
          <svg width="37" height="124"><path d="M6 9h26M6 14h26" stroke="#fff" stroke-width="2" stroke-dasharray="2 2.500"/><path d="M13 27l10 12M23 27L13 39" stroke="#fff" stroke-width="3"/><path d="M8 77l12-12M20 66c-3-5 2-9 6-8l-3 4 3 2 4-3c1 5-4 8-8 6" stroke="#fff" stroke-width="3" fill="none"/></svg>
        </div>
        <div class="cmdmain">
          <div class="hist"><p>命令: *取消*</p><p>命令:</p><p>请选择边界</p></div>
          <div class="inp"><svg width="25" height="20"><path d="M1 1h23v18H1z" fill="#f4f4f4" stroke="#777" stroke-width="1.500"/><path d="M1 1h23v4H1z" fill="#888"/><path d="M5 8l4 3-4 3M11 15h6" fill="none" stroke="#555" stroke-width="1.500"/></svg><i class="caret gr"></i><span>选择对象:</span><i class="up"></i></div>
        </div>
      </div>
    </div>
  </div>

  <footer class="status">
    <div class="layouts"><a class="on">模型</a><a>布局1</a><a>布局2</a><a class="add"><svg width="12" height="12"><path d="M6 0v12M0 6h12" stroke="#b9bec6" stroke-width="3"/></svg></a></div>
    <div class="segs">
      <div class="seg s1">模型</div>
      <div class="seg s2"><svg width="24" height="24" stroke="#dcdee0" stroke-width="1.700"><path d="M6 1v22M12 1v22M18 1v22M0 6h24M0 12h24M0 18h24"/></svg><svg width="22" height="20" stroke="#dcdee0" stroke-width="3" stroke-dasharray="3 5"><path d="M1 2h20M1 10h20M1 18h20"/></svg><i class="caret"></i></div>
      <div class="seg s3"><svg width="26" height="26" fill="none" stroke="#dcdee0" stroke-width="1.800"><path d="M2 1v23h23M2 16h8v8"/></svg><div class="act"><svg width="26" height="26" fill="none" stroke="#fff" stroke-width="2"><circle cx="11" cy="14" r="9"/><path d="M24 14H12L21 3M17 8c3 2 4 4 4 6"/></svg></div><i class="caret"></i><svg class="iso" width="22" height="24" stroke-width="2"><path d="M2 2l18 18" stroke="#e0555a"/><path d="M11 0v23" stroke="#3fc95a"/><path d="M9 9h4v4H9z" fill="#333" stroke="#fff"/></svg><i class="caret"></i></div>
      <div class="seg s4"><div class="act"><svg width="28" height="26" fill="none" stroke="#fff" stroke-width="2"><path d="M20 4L4 22h22"/><circle cx="12" cy="13" r="2" fill="#fff"/></svg></div><div class="act"><svg width="28" height="28" fill="none" stroke="#fff" stroke-width="2"><path d="M2 2h6v6H2zM11 5h13v20H5V11"/></svg></div><i class="caret"></i></div>
      <div class="seg s5"><svg width="27" height="24" stroke="#dcdee0"><path d="M0 3h27M12 11h15M12 18h15" stroke-width="2"/><path d="M0 4h12M0 11h12" stroke-width="3.500"/><path d="M0 19h12" stroke-width="6"/></svg></div>
      <div class="seg s6"><div class="act"><svg width="28" height="26"><use href="#person" x="0" width="22" height="26"/><circle cx="22" cy="6" r="4" fill="none" stroke="#fff" stroke-width="2"/></svg></div><svg width="26" height="26"><use href="#person" x="0" width="21" height="26"/><path d="M20 1l-4 6h4l-2 5 6-7h-4l2-4z" fill="#dcdee0"/></svg><svg class="p3" width="22" height="26"><use href="#person" width="22" height="26"/></svg><span>1:1</span><i class="caret"></i></div>
      <div class="seg s7"><svg width="24" height="24"><use href="#gear"/></svg><i class="caret"></i></div>
      <div class="seg s8"><svg width="24" height="24"><path d="M12 0v24M0 12h24" stroke="#dcdee0" stroke-width="3"/></svg></div>
      <div class="seg s9"><svg width="25" height="26" fill="none" stroke="#dcdee0" stroke-width="1.700"><path d="M1 2h9v9H1zM5 24l5-9 5 9z"/><circle cx="19" cy="11" r="4.500"/></svg><svg width="24" height="22"><path d="M3 1h20v17H3z" fill="#dbe6f8"/><path d="M0 17h24v4H0z" fill="#a9c3ea"/><text x="8" y="16" class="two">2</text></svg></div>
      <div class="seg s10"><svg width="38" height="36"><path d="M0 0h22l8 8v20H0z" fill="#2672ae"/><path d="M0 21h14v11H0z" fill="#ffb52c"/><path d="M8 0v21M0 8h26" stroke="#dfefff" stroke-width="1.500"/><circle cx="8" cy="8" r="3.500" fill="#2672ae" stroke="#fff" stroke-width="1.500"/><path d="M15 25l7 7 12-12" fill="none" stroke="#46b450" stroke-width="6"/></svg></div>
      <div class="seg s11"><svg width="26" height="20" fill="none" stroke="#dcdee0" stroke-width="1.700"><path d="M1 1h24v17H1zM15 8l5-4M16 4h4v4M11 11l-5 4M6 11v4h5"/></svg><svg width="25" height="24" stroke="#dcdee0" stroke-width="2.500"><path d="M0 3h25M0 12h25M0 21h25"/></svg></div>
    </div>
  </footer>

  <div class="term">
    <div class="thead">
      <div class="ttab"><svg width="21" height="23" fill="none" stroke="#fff" stroke-width="1.800"><rect x="1" y="1" width="19" height="21" rx="4"/><path d="M1 5.500h19"/><path d="M8 11H5v5h3M11 11v1M11 15v1M14 10l3 7" stroke-width="1.500"/></svg><span>cad边界识别 by kaka</span><svg width="14" height="14"><path d="M1 1l12 12M13 1L1 13" stroke="#ddd" stroke-width="1.500"/></svg></div>
      <svg class="tctl" width="64" height="32" fill="none" stroke="#eee" stroke-width="1.600"><path d="M8 9v14M1 16h14"/><path d="M33 0v32" stroke="#57534c"/><path d="M49 14l5 5 5-5"/></svg>
      <svg class="twin" width="156" height="18" fill="none" stroke="#fff" stroke-width="1.800"><path d="M1 9h14"/><path d="M70 2h13v13H70zM139 2l14 14M153 2l-14 14"/></svg>
    </div>
    <pre class="tbody">【提示】<b>AutoCAD </b>连接成功<b>!</b>
【提示】请在<b>cad</b>中选择边界</pre>
  </div>
</div>
</body>
</html>
```
FILE: styles.css
```css
* { box-sizing: border-box; }
body { margin: 0; width: 2556px; height: 1368px; overflow: hidden; background: #212830; color: #e4e6ea;
  font: 18px/24px "Noto Sans", "Noto Sans CJK SC", sans-serif; }
.defs { position: absolute; }
svg { display: block; flex: none; }
b, h4, h5, em { font-weight: 400; font-style: normal; font-size: 18px; margin: 0; }
.app { position: relative; width: 2556px; height: 1368px; display: flex; flex-direction: column; }
.caret { display: block; flex: none; width: 0; height: 0; border: 4px solid transparent; border-top: 5px solid #d8dade; border-bottom: 0; }
.caret.big { border-width: 6px 6px 0; }
.caret.faint { border-top-color: #8d93a0; }
.caret.dark { border-top-color: #333; }
.caret.cy { border-top-color: #57b9e8; border-left-width: 3px; border-right-width: 3px; border-top-width: 4px; }
.caret.gr { border-top-color: #666; }

/* title bar and menu */
.top { display: flex; height: 63px; }
.appbtn { width: 57px; height: 57px; background: linear-gradient(#6d6f72, #a9abac); border-right: 1px solid #000; border-bottom: 1px solid #000; display: flex; align-items: center; gap: 1px; padding: 0 0 16px 2px; }
.appbtn .caret { margin-top: 22px; border-width: 6px 6px 0; }
.toprows { flex: 1; }
.titlebar { height: 31px; background: #464d62; display: flex; margin-left: 0; }
.qat { display: flex; align-items: center; width: 297px; height: 26px; padding-left: 14px; gap: 11px; }
.qat .caret { margin: 0 -2px 0 1px; }
.workspace { width: 268px; height: 29px; background: #3b4350; border: 1px solid #2c323c; border-top: 0; display: flex; align-items: center; padding: 0 2px 0 4px; gap: 4px; }
.workspace span { flex: 1; color: #eef0f2; }
.custom { margin: 8px 0 0 6px; }
.caption { flex: 1; display: flex; gap: 22px; color: #9a9fac; font-size: 18.700px; line-height: 28px; padding-left: 617px; }
.winbtns { width: 92px; padding-top: 4px; }
.menu { height: 32px; background: #212830; display: flex; align-items: center; padding-left: 7px; color: #a8adb5; }
.menu a { height: 27px; line-height: 27px; align-self: flex-end; padding: 0 15px; margin-right: 0; white-space: nowrap; }
.menu a.on { background: #3b4453; color: #eef0f2; width: 64px; padding: 0 14px; margin-right: 1px; }
.menu svg { margin: 0 8px 0 34px; }

/* ribbon */
.ribbon { height: 146px; background: #3b4453; display: flex; border-top: 1px solid #454c5c; }
.panel { border-right: 2px solid #2a313b; display: flex; flex-direction: column; position: relative; flex: none; }
.p-draw { width: 314px; } .p-modify { width: 340px; } .p-annot { width: 234px; } .p-layer { width: 378px; }
.p-block { width: 201px; } .p-props { width: 367px; } .p-group { width: 102px; } .p-util { width: 114px; }
.p-clip { width: 113px; } .p-view { width: 100px; border: 0; }
.body { display: flex; height: 119px; padding-top: 6px; }
.panel h4 { height: 26px; line-height: 26px; display: flex; justify-content: center; align-items: center; gap: 9px; white-space: nowrap; }
.p-draw h4, .p-modify h4 { padding-right: 2px; }
.p-view h4 em { font-size: 11px; }
.big { display: flex; flex-direction: column; align-items: center; padding-top: 3px; text-align: center; flex: none; }
.big b { line-height: 23px; margin-top: 4px; white-space: nowrap; }
.big .caret { margin-top: 3px; }
.up2 { margin: -2px 0 1px; }
.w50 { width: 50px; } .w60 { width: 60px; } .w62 { width: 62px; } .w68 { width: 68px; }
.w72 { width: 72px; } .w74 { width: 74px; } .w75 { width: 75px; } .w92 { width: 92px; }
.tool { height: 36px; display: flex; align-items: center; gap: 8px; white-space: nowrap; }
.tools { padding-left: 8px; }
.p-draw .tool .caret { margin-left: 2px; }
.grid { display: grid; grid-template-columns: 88px 88px 112px auto; grid-auto-rows: 36px; padding-left: 10px; }
.p-modify .tool .caret { margin-left: 10px; }
.p-modify .tool .near { margin-left: 5px; }
.p-annot .tools { padding-left: 11px; }
.p-annot .tool .caret { margin-left: 4px; }
.layercol { display: flex; flex-direction: column; padding-left: 1px; }
.combo { background: #46516f; height: 30px; border: 1px solid #333b4b; display: flex; align-items: center; }
.layercol .combo { width: 310px; margin: 2px 0 4px; padding: 0 2px 0 8px; }
.swatch { width: 22px; height: 22px; background: #000; margin: 0 7px 0 8px; flex: none; }
.combo span { flex: 1; }
.icons { height: 36px; display: flex; align-items: center; gap: 12px; padding-left: 5px; }
.icons b { margin-left: -4px; }
.p-block .tools { padding-left: 5px; }
.p-block .tool .caret { margin-left: 3px; }
.propicons { width: 31px; padding-left: 2px; display: flex; flex-direction: column; gap: 10px; padding-top: 4px; }
.combos { width: 268px; display: flex; flex-direction: column; gap: 5.500px; padding-top: 2px; }
.combos .combo { padding: 0 1px 0 4px; }
.combos .swatch { width: 24px; height: 24px; border: 1px solid #999; margin: 0 15px 0 13px; }
.rule { width: 95px; height: 2px; background: #eee; margin-right: 4px; }
.tools.flush { padding-left: 0; }
.flush .tool { padding-left: 6px; width: 36px; }
.flush .active { border: 2px solid #62b0f0; background: #35506c; height: 34px; padding-left: 5px; }
.p-util .tools { padding-left: 3px; }
.p-clip .tools { padding-left: 7px; }

/* file tabs */
.files { height: 43px; background: #212830; display: flex; align-items: flex-end; padding-left: 25px; border-bottom: 1px solid #1a2026; box-shadow: inset 0 -2px #464c5c; }
.ftab { height: 34px; display: flex; align-items: center; white-space: nowrap; clip-path: polygon(13px 0, calc(100% - 13px) 0, 100% 100%, 0 100%); }
.t1 { width: 187px; background: #2d3440; color: #b3b8c0; padding: 0 18px 0 19px; justify-content: space-between; }
.t2 { width: 356px; background: #3b4453; padding: 0 25px 0 16px; justify-content: space-between; color: #eef0f2; letter-spacing: -.02px; }
.fadd { width: 28px; height: 22px; margin: 0 0 6px 7px; background: #2f3742; border-radius: 6px; display: flex; align-items: center; justify-content: center; }

/* main */
.main { display: flex; height: 1075px; }
.side { width: 404px; background: #3b4453; border-right: 2px solid #2f3743; }
.sidehead { height: 37px; background: #2b343d; display: flex; align-items: center; gap: 8px; padding: 4px 0 0 5px; }
.grip { width: 5px; height: 15px; background: repeating-linear-gradient(#aaa 0 1px, transparent 1px 3px); }
.selrow { display: flex; align-items: center; padding: 18px 0 10px 24px; }
.sel { width: 266px; height: 31px; background: linear-gradient(#43506a, #4d6380); display: flex; align-items: center; justify-content: space-between; padding: 0 6px 0 3px; margin-right: 11px; }
.selrow svg { margin-right: 13px; }
.sec { width: 362px; margin: 0 0 5.4px 22px; }
.sec h5 { height: 29.8px; background: #25302f; font-weight: 700; line-height: 30px; color: #fff; padding: 0 12px 0 10px; display: flex; align-items: center; justify-content: space-between; }
dl { margin: 0 0 0 26px; display: grid; grid-template-columns: 150px 186px; border-left: 1px solid #2c3641; border-right: 1px solid #2c3641; }
dt, dd { margin: 0; height: 29.25px; line-height: 29px; border-bottom: 1px solid #2c3641; white-space: nowrap; }
dt { padding-left: 8px; border-right: 1px solid #2c3641; color: #dcdfe4; }
dd { padding-left: 3px; display: flex; align-items: center; color: #f0f2f4; }
dd.dim { color: #9a9fa6; }
.sw { width: 15px; height: 15px; background: #000; margin: 0 10px 0 1px; }
i.ln { width: 83px; height: 2px; background: #e8e8e8; margin-right: 7px; }
i.ln.a { width: 78px; margin-left: 6px; }

.work { position: relative; width: 2152px; }
.strip { height: 22px; padding: 4px 0 0 3px; display: flex; align-items: center; background: #212830; font-size: 10px; line-height: 17px; white-space: nowrap; }
.strip .caret { margin-left: 3px; }
.m1 { margin-left: 7px; } .m2 { margin-left: 8px; } .m3 { margin-left: 8px; }
.d1 { color: #0a0d10; width: 70px; margin: 0 0 0 5px; }
.d2 { background: #5b97db; width: 200px; height: 17px; display: flex; align-items: center; gap: 5px; padding-left: 3px; color: #0d1a2a; margin-left: 4px; font-size: 9.500px; font-weight: 500; }
.pl { color: #0a0d10; margin-left: 6px; }
.m4 { margin-left: auto; }
.vp { font: 18px "Noto Sans", "Noto Sans CJK SC", sans-serif; fill: #222; }
.canvas .ln path { fill: none; stroke-width: 1.200; }
.st text { font: 30px "Liberation Serif", serif; fill: #000; stroke: #000; stroke-width: .8; }
.st .gr text { fill: #1be01b; stroke: #1be01b; }
.ti text { font: 39px "Liberation Serif", serif; fill: #000; stroke: #000; stroke-width: .6; white-space: pre; }

.cmd { position: absolute; left: 328px; top: 952px; width: 913px; height: 124px; border: 2px solid #5c6270; border-radius: 5px 5px 0 0; display: flex; overflow: hidden; background: #5c6270; color: #4a4a4a; font: 19.6px/23.500px "Liberation Mono", "Noto Sans CJK SC", monospace; }
.cmdside { width: 35px; }
.cmdside svg { margin: -2px 0 0 -2px; }
.cmdmain { flex: 1; display: flex; flex-direction: column; }
.hist { height: 91px; background: #d6d6d6; padding: 20px 0 0 4px; border-bottom: 2px solid #777; font-size: 19.500px; }
.hist p { margin: 0; height: 23.500px; letter-spacing: -.5px; }
.inp { flex: 1; background: #f7f7f7; display: flex; align-items: center; padding: 2px 6px 0 6px; gap: 4px; }
.inp span { flex: 1; letter-spacing: -.7px; margin-left: -1px; }
.up { border: 6px solid transparent; border-top: 0; border-bottom: 8px solid #888; }

/* status bar */
.status { height: 41px; background: #20272f; display: flex; justify-content: space-between; }
.layouts { display: flex; padding-left: 15px; height: 26px; line-height: 28px; color: #a8adb5; }
.layouts a { background: #29313b; width: 82px; text-align: center; clip-path: polygon(0 0, 100% 0, calc(100% - 10px) 100%, 10px 100%); }
.layouts a.on { background: #3b4453; color: #fff; font-weight: 700; width: 67px; }
.layouts .add { width: 46px; display: flex; align-items: center; justify-content: center; }
.segs { display: flex; padding-top: 3px; width: 881px; }
.seg { height: 36px; background: #3b4453; display: flex; align-items: center; flex: none; }
.act { width: 33px; height: 33px; background: #5b97d2; display: flex; align-items: center; justify-content: center; flex: none; }
.seg .caret { border-width: 6px 5px 0; }
.s1 { width: 41px; padding-left: 5px; font-weight: 700; font-size: 17.500px; margin-right: 4px; white-space: nowrap; }
.s2 { width: 96px; padding-left: 7px; gap: 14px; margin-right: 4px; }
.s2 .caret { margin-left: -2px; }
.s3 { width: 152px; padding-left: 5px; gap: 6px; margin-right: 2px; } .s3 .caret { margin-left: 2px; } .iso { margin: 0 7px 0 7px; }
.s4 { width: 94px; padding-left: 2px; gap: 4px; margin-right: 3px; } .s4 .caret { margin-left: 4px; }
.s5 { width: 36px; padding-left: 5px; margin-right: 4px; }
.s6 { width: 157px; padding-left: 1px; gap: 8px; margin-right: 5px; } .p3 { margin: 0 6px 0 3px; } .s6 .caret { margin-left: -3px; }
.s7 { width: 59px; padding-left: 6px; gap: 13px; margin-right: 2px; }
.s8 { width: 36px; padding-left: 5px; margin-right: 4px; }
.s9 { width: 61px; padding-left: 6px; gap: 6px; margin-right: 4px; }
.s10 { width: 45px; padding-left: 4px; margin-right: 4px; }
.s11 { width: 69px; padding-left: 7px; gap: 9px; }
.two { font: 700 15px "Noto Sans", sans-serif; fill: #34506e; }

/* terminal window */
.term { position: absolute; left: 1752px; top: 194px; width: 698px; height: 263px; border-radius: 12px; background: #020203; box-shadow: 0 0 0 1px #55534c, 0 34px 60px rgba(0,0,0,.45), 0 4px 18px rgba(0,0,0,.3); overflow: visible; }
.thead { height: 60px; background: #363530; border-radius: 12px 12px 0 0; display: flex; padding: 12px 0 0 13px; }
.ttab { width: 311px; height: 48px; background: #020203; border-radius: 12px 12px 0 0; display: flex; align-items: center; padding: 0 25px 0 15px; color: #fff; font-weight: 500; }
.ttab span { flex: 1; margin-left: 16px; white-space: nowrap; font: 600 17.500px "Noto Sans", "Noto Sans CJK SC", sans-serif; letter-spacing: -.35px; }
.tctl { margin: 8px 0 0 24px; }
.twin { margin: 9px 0 0 106px; }
.tbody { margin: 0; padding: 10px 0 0 12px; color: #d2d2d2; font: 25px/28px "Noto Sans CJK SC", sans-serif; letter-spacing: 3px; }
.tbody b { font: 23px/20px "DejaVu Sans Mono", monospace; letter-spacing: .1px; }
```
